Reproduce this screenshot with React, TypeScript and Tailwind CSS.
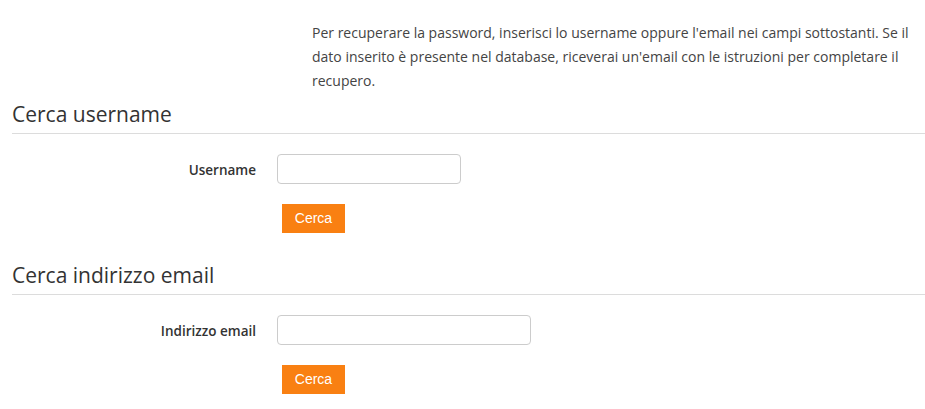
import React from "react";

const font = { fontFamily: '"Open Sans", "Noto Sans", sans-serif' };

function Section({ title, label, inputW }: { title: string; label: string; inputW: string }) {
  return (
    <div>
      <div className="ml-[12px] border-b border-[#dcdcdc] pb-[5px]">
        <h3 className="text-[21px] leading-[28px] font-normal text-[#333]">{title}</h3>
      </div>
      <div className="mt-[20px] flex items-center">
        <label className="w-[256px] pt-[3px] text-right text-[13.5px] font-semibold text-[#333]">{label}</label>
        <input
          type="text"
          className={`ml-[21px] h-[30px] ${inputW} rounded-[4px] border border-[#ccc] bg-white outline-none`}
        />
      </div>
      <div className="mt-[20px] pl-[282px]">
        <button
          className="h-[29px] w-[63px] bg-[#f98012] text-[14px] text-white"
          style={{ fontFamily: '"Liberation Sans", Arial, sans-serif' }}
        >
          Cerca
        </button>
      </div>
    </div>
  );
}

export default function App() {
  return (
    <div className="w-[925px] h-[409px] bg-white overflow-hidden" style={font}>
      <p className="pt-[21px] pl-[312px] pr-[14px] text-[14px] leading-[24px] text-[#444]">
        Per recuperare la password, inserisci lo username oppure l'email nei campi sottostanti. Se il dato inserito è presente nel database, riceverai un'email con le istruzioni per completare il recupero.
      </p>
      <div className="mt-[7px]">
        <Section title="Cerca username" label="Username" inputW="w-[184px]" />
      </div>
      <div className="mt-[28px]">
        <Section title="Cerca indirizzo email" label="Indirizzo email" inputW="w-[254px]" />
      </div>
    </div>
  );
}
